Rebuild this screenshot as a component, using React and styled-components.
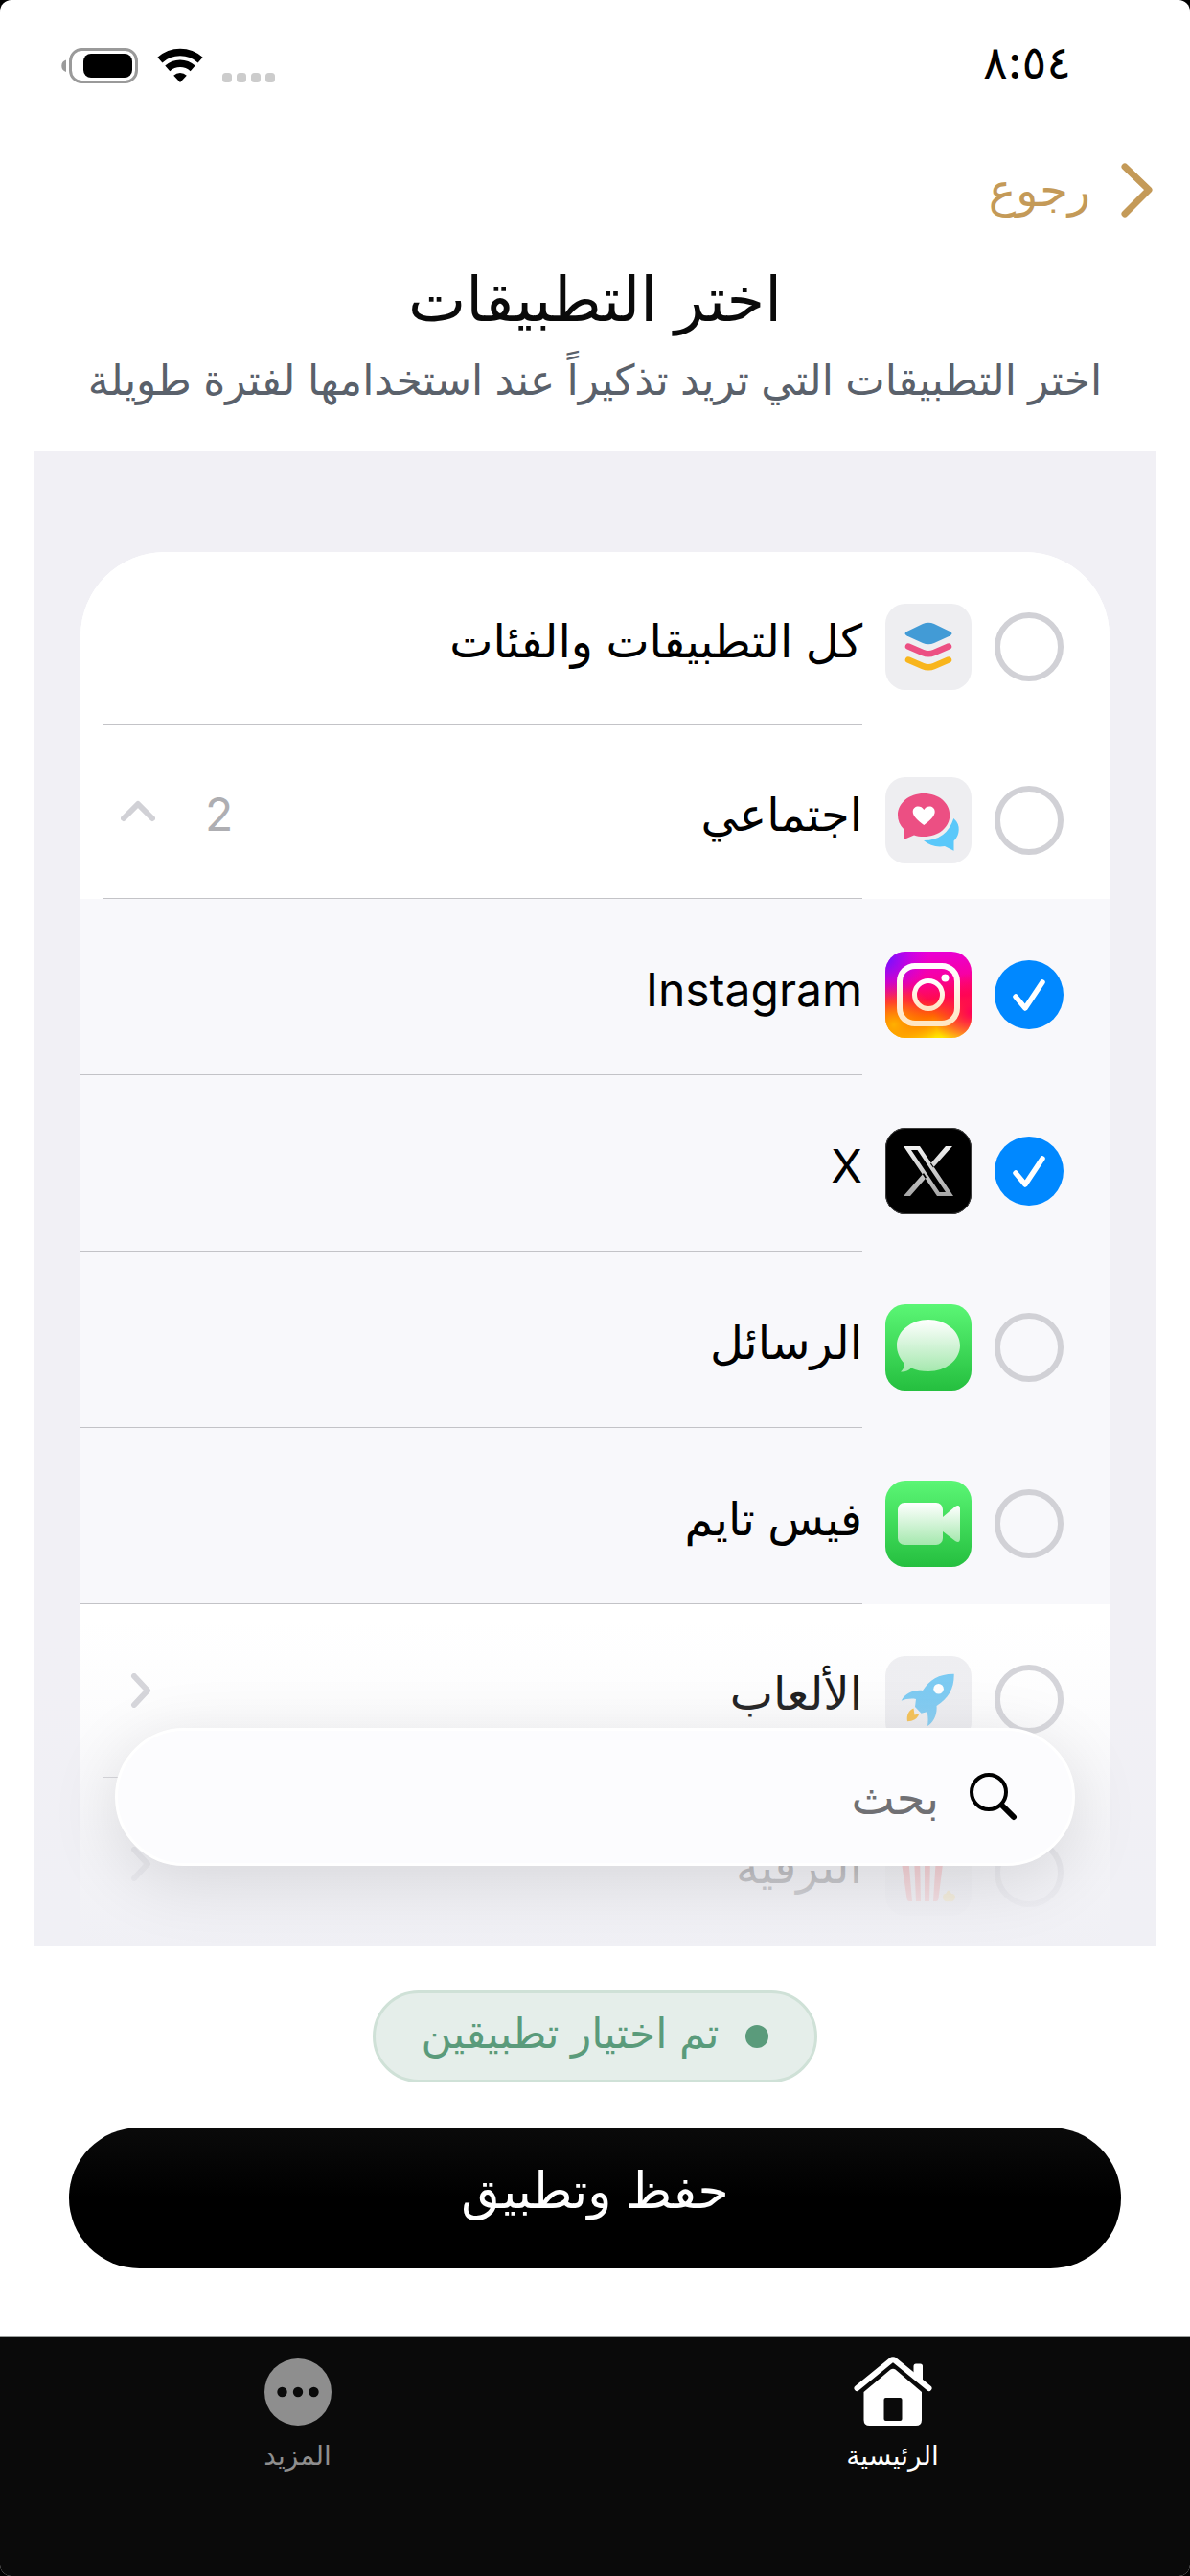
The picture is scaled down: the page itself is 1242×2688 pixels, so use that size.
import { useState } from "react";
import styled, { createGlobalStyle } from "styled-components";

//-----------------Global-------------------
const GlobalStyle = createGlobalStyle`
  * {
    box-sizing: border-box;
  }

  body {
    margin: 0;
    background: #000;
    font-family: Inter, "DejaVu Sans", sans-serif;
  }

  button, input {
    font-family: inherit;
    border: none;
    background: none;
    padding: 0;
    margin: 0;
  }
`;

//-----------------Styled components-------------------
const Screen = styled.main`
  display: flex;
  flex-direction: column;
  height: 100vh;
  background: #fff;
  border-radius: 12px;
  overflow: hidden;
`;

const StatusBar = styled.div`
  display: flex;
  justify-content: space-between;
  align-items: center;
  height: 136px;
  padding: 0 124px 0 64px;
`;

const StatusTime = styled.time`
  padding-bottom: 6px;
  font-size: 48px;
  font-weight: 500;
  line-height: 48px;
  color: #000;
`;

const StatusIcons = styled.div`
  display: flex;
  direction: ltr;
  align-items: flex-end;
  gap: 20px;
`;

const BackButton = styled.button`
  display: flex;
  align-items: center;
  align-self: flex-start;
  gap: 32px;
  height: 124px;
  padding: 0 38px;
  color: #c49a58;
  font-size: 48px;
  line-height: 56px;
  cursor: pointer;
`;

const Heading = styled.header`
  height: 211px;
  padding: 4px 36px 0;
  text-align: center;
`;

const Title = styled.h1`
  margin: 0;
  font-size: 64px;
  font-weight: 400;
  line-height: 96px;
  color: #0a0a0a;
`;

const Subtitle = styled.p`
  margin: 0;
  font-size: 44px;
  line-height: 72px;
  color: #5a616b;
  white-space: nowrap;
`;

const Picker = styled.section`
  position: relative;
  flex: 1;
  min-height: 0;
  margin: 0 36px;
  padding: 105px 48px 0;
  background: #f1f0f5;
  overflow: hidden;
`;

const AppList = styled.ul`
  margin: 0;
  padding: 0;
  list-style: none;
  background: #fff;
  border-radius: 88px 88px 0 0;
  overflow: hidden;
`;

const Row = styled.li`
  display: flex;
  align-items: center;
  gap: 24px;
  height: ${(p) => (p.$nested ? 184 : 181)}px;
  padding-right: 48px;
  background: ${(p) => (p.$nested ? "#f8f8fb" : "#fff")};
`;

const Lead = styled.div`
  display: flex;
  align-items: center;
  gap: 24px;
  padding-top: 16px;
`;

const Tick = styled.span`
  display: grid;
  width: 72px;
  height: 72px;

  & > * {
    grid-area: 1 / 1;
  }

  svg {
    pointer-events: none;
  }
`;

const TickBox = styled.input`
  appearance: none;
  width: 72px;
  height: 72px;
  border: 6px solid #d1d1d6;
  border-radius: 50%;
  cursor: pointer;

  &:checked {
    border: none;
    background: #0088ff;
  }
`;

const RowBody = styled.div`
  display: flex;
  align-items: center;
  align-self: stretch;
  flex: 1;
  margin-left: ${(p) => (p.$nested ? 0 : 24)}px;
  padding-left: 18px;
  border-bottom: 1px solid #c3c3c7;
`;

const RowLabel = styled.label`
  flex: 1;
  padding-top: 6px;
  font-size: 48px;
  line-height: 64px;
  color: #000;
`;

const Count = styled.span`
  margin-left: 52px;
  padding-top: 6px;
  font-size: 48px;
  line-height: 64px;
  color: #aeaeb2;
`;

const ExpandButton = styled.button`
  display: flex;
  color: #d1d1d6;
  cursor: pointer;
`;

const Fade = styled.div`
  position: absolute;
  left: 0;
  right: 0;
  bottom: 0;
  height: 340px;
  background: linear-gradient(
    rgba(240, 240, 245, 0) 0%,
    rgba(240, 240, 245, 0.14) 24%,
    rgba(240, 240, 245, 0.78) 75%,
    #f0f0f5 100%
  );
  pointer-events: none;
`;

const SearchBar = styled.label`
  position: absolute;
  left: 84px;
  right: 84px;
  bottom: 84px;
  display: flex;
  align-items: center;
  gap: 32px;
  height: 144px;
  padding: 0 57px;
  border: 3px solid #fff;
  border-radius: 72px;
  background: #fcfcfe;
  box-shadow: 0 16px 72px rgba(0, 0, 0, 0.12);
`;

const SearchInput = styled.input`
  flex: 1;
  min-width: 0;
  height: 100px;
  font-size: 48px;
  outline: none;

  &::placeholder {
    color: #707074;
    opacity: 1;
  }
`;

const Footer = styled.footer`
  display: flex;
  flex-direction: column;
  align-items: center;
  gap: 47px;
  padding: 46px 72px 71px;
`;

const SelectionPill = styled.output`
  display: flex;
  align-items: center;
  gap: 28px;
  height: 96px;
  padding: 0 48px;
  border: 3px solid #cfe1d7;
  border-radius: 48px;
  background: #e5eeea;
  color: #5a9b7b;

  &::before {
    content: "";
    width: 24px;
    height: 24px;
    border-radius: 50%;
    background: currentColor;
  }
`;

const PillText = styled.span`
  padding-bottom: 8px;
  font-size: 44px;
  line-height: 56px;
`;

const SaveButton = styled.button`
  align-self: stretch;
  height: 147px;
  padding-bottom: 16px;
  border-radius: 74px;
  background: linear-gradient(#0a0a0a, #000 50%);
  color: #fff;
  font-size: 52px;
  line-height: 64px;
  cursor: pointer;
`;

const TabBar = styled.nav`
  display: flex;
  height: 250px;
  border-top: 1px solid #9b9f9d;
  background: #0a0a0a;
`;

const Tab = styled.a`
  display: flex;
  flex: 1;
  flex-direction: column;
  align-items: center;
  gap: 6px;
  padding-top: 20px;
  color: ${(p) => (p.$active ? "#fff" : "#8e8e8e")};
  font-size: 28px;
  line-height: 48px;
  text-decoration: none;
`;

//-----------------Icons-------------------
const BatteryIcon = () => (
  <svg width="80" height="37" viewBox="0 0 80 37">
    <path d="M5 12.500 A6.500 6.500 0 0 0 5 25 Z" fill="#9a9a9a" />
    <rect x="9.500" y="1.500" width="69" height="34" rx="12" fill="none" stroke="#9a9a9a" strokeWidth="3" />
    <rect x="23" y="6" width="51" height="25" rx="8" fill="#000" />
  </svg>
);

const WifiIcon = () => (
  <svg width="48" height="37" viewBox="0 0 48 37">
    <g fill="none" stroke="#000" strokeWidth="7.500">
      <path d="M2.900 12.600 A31.500 31.500 0 0 1 45.100 12.600" />
      <path d="M10.800 21.400 A19.700 19.700 0 0 1 37.200 21.400" />
    </g>
    <path d="M24 36 L17.200 28.700 A10 10 0 0 1 30.800 28.700 Z" fill="#000" />
  </svg>
);

const SignalDots = () => (
  <svg width="56" height="11" viewBox="0 0 56 11">
    {[0, 15, 30, 45].map((x) => (
      <rect key={x} x={x} y="0" width="10" height="10" rx="3.500" fill="#ccc" />
    ))}
  </svg>
);

const Chevron = ({ d, width, height, stroke }) => (
  <svg width={width} height={height} viewBox={`0 0 ${width} ${height}`}>
    <path d={d} fill="none" stroke="currentColor" strokeWidth={stroke} strokeLinecap="round" strokeLinejoin="round" />
  </svg>
);

const SearchIcon = () => (
  <svg width="50" height="50" viewBox="0 0 50 50" fill="none" stroke="#000">
    <circle cx="20" cy="20" r="18" strokeWidth="4" />
    <path d="M34 34 L46 46" strokeWidth="6" strokeLinecap="round" />
  </svg>
);

const HomeIcon = () => (
  <svg width="82" height="73" viewBox="0 0 82 73">
    <path d="M62.500 22 V10 Q62.500 7.500 65 7.500 H69.500 Q72 7.500 72 10 V29 Z" fill="#fff" />
    <path d="M3.500 33 L39 4 Q41 2.500 43 4 L78.500 33" fill="none" stroke="#fff" strokeWidth="6" strokeLinecap="round" />
    <path d="M10.500 37 L38.500 13.500 Q41 11.800 43.500 13.500 L71 37 V66 Q71 72 65 72 H16.500 Q10.500 72 10.500 66 Z" fill="#fff" />
    <rect x="31.500" y="43" width="19" height="24" rx="2" fill="#0a0a0a" />
  </svg>
);

const MoreIcon = () => (
  <svg width="70" height="73" viewBox="0 0 70 73">
    <circle cx="35" cy="37" r="35" fill="#8e8e8e" />
    <g fill="#0a0a0a">
      <circle cx="18.500" cy="37" r="5.200" />
      <circle cx="35" cy="37" r="5.200" />
      <circle cx="51.500" cy="37" r="5.200" />
    </g>
  </svg>
);

const Tile = ({ fill = "#eeeef1", children }) => (
  <svg width="90" height="90" viewBox="0 0 90 90" aria-hidden="true">
    <rect width="90" height="90" rx="21" fill={fill} />
    {children}
  </svg>
);

const AllIcon = () => (
  <Tile>
    <path d="M22.500 29 L39 21 Q45 18.300 51 21 L67.500 29 Q71.500 31 67.500 33.500 L51 41 Q45 43.700 39 41 L22.500 33.500 Q18.500 31 22.500 29 Z" fill="#429bd6" />
    <path d="M24 44.500 L39 51 Q45 53.500 51 51 L66 44.500" fill="none" stroke="#ec4f83" strokeWidth="6.500" strokeLinecap="round" />
    <path d="M24 58.500 L39 65 Q45 67.500 51 65 L66 58.500" fill="none" stroke="#f8b51d" strokeWidth="6.500" strokeLinecap="round" />
  </Tile>
);

const SocialIcon = () => (
  <Tile>
    <path d="M71.300 43 Q77 48 76.700 55 Q76.500 62 71.500 66.500 L71.500 76.700 L62 72 Q49 74 40 66 Q64 66 71.300 43 Z" fill="#5ac8fa" />
    <path d="M40 17 C56 17 67.300 27 67.300 39.500 C67.300 52 56 62 40 62 C36 62 33 61.500 30 60.500 L19.500 65 V54.500 C15 50 13 45 13 39.500 C13 27 25 17 40 17 Z" fill="#ec4f83" />
    <path d="M40.300 50 C34 45 28.700 41 28.700 36 C28.700 30 37 28.500 40.300 34 C43.500 28.500 51.700 30 51.700 36 C51.700 41 46.500 45 40.300 50 Z" fill="#fff" />
  </Tile>
);

const InstagramIcon = () => (
  <Tile fill="url(#igBase)">
    <defs>
      <linearGradient id="igBase" x1="0.450" y1="0" x2="0.550" y2="1">
        <stop offset="0" stopColor="#e800d8" />
        <stop offset="0.300" stopColor="#f700a4" />
        <stop offset="0.550" stopColor="#ff0a50" />
        <stop offset="0.750" stopColor="#ff6a00" />
        <stop offset="1" stopColor="#ffe600" />
      </linearGradient>
      <radialGradient id="igViolet" cx="0" cy="0.080" r="0.500">
        <stop offset="0" stopColor="#6a14ff" />
        <stop offset="1" stopColor="#b400ff" stopOpacity="0" />
      </radialGradient>
      <radialGradient id="igRed" cx="1" cy="0.700" r="0.450">
        <stop offset="0" stopColor="#ff0058" />
        <stop offset="1" stopColor="#ff0058" stopOpacity="0" />
      </radialGradient>
      <radialGradient id="igAmber" cx="0.100" cy="0.850" r="0.500">
        <stop offset="0" stopColor="#ffb000" />
        <stop offset="1" stopColor="#ff5a00" stopOpacity="0" />
      </radialGradient>
      <linearGradient id="igGlyph" x1="0" y1="0" x2="0" y2="1">
        <stop offset="0" stopColor="#fff" />
        <stop offset="1" stopColor="#ffe6c4" />
      </linearGradient>
    </defs>
    <rect width="90" height="90" rx="21" fill="url(#igAmber)" />
    <rect width="90" height="90" rx="21" fill="url(#igRed)" />
    <rect width="90" height="90" rx="21" fill="url(#igViolet)" />
    <rect x="15" y="15" width="60" height="60" rx="16" fill="none" stroke="url(#igGlyph)" strokeWidth="6" />
    <circle cx="45" cy="45" r="14.500" fill="none" stroke="url(#igGlyph)" strokeWidth="5" />
    <circle cx="62.500" cy="27.500" r="4" fill="#fff" />
  </Tile>
);

const XIcon = () => (
  <Tile fill="#000">
    <defs>
      <linearGradient id="xGlyph" x1="0" y1="0" x2="0" y2="1">
        <stop offset="0" stopColor="#f2f2f2" />
        <stop offset="1" stopColor="#a6a6a6" />
      </linearGradient>
    </defs>
    <rect x="0.500" y="0.500" width="89" height="89" rx="20.500" fill="none" stroke="#3c3c3c" />
    <path
      fill="url(#xGlyph)"
      fillRule="evenodd"
      d="M19 19 H36 L71 71 H54 Z M27 23 L56.500 67 H63 L33.500 23 Z M63 19 H70 L50 41.500 L47 37.500 Z M19 71 H26 L43 51.500 L40 47 Z"
    />
  </Tile>
);

const GreenDefs = () => (
  <defs>
    <linearGradient id="green" x1="0" y1="0" x2="0" y2="1">
      <stop offset="0" stopColor="#5bf675" />
      <stop offset="1" stopColor="#25bf3f" />
    </linearGradient>
    <linearGradient id="frost" x1="0" y1="0" x2="0" y2="1">
      <stop offset="0" stopColor="#fff" />
      <stop offset="1" stopColor="#a5e8ae" />
    </linearGradient>
  </defs>
);

const MessagesIcon = () => (
  <Tile fill="url(#green)">
    <GreenDefs />
    <path d="M45 16 C63 16 78 28 78 43 C78 58 63 70 45 70 C38 70 32 69 27 66.500 C24 69.500 20 71 16 70.500 C19 68 20 65 19.500 61.500 C15 56.500 12 50 12 43 C12 28 27 16 45 16 Z" fill="url(#frost)" />
  </Tile>
);

const FaceTimeIcon = () => (
  <Tile fill="url(#green)">
    <GreenDefs />
    <rect x="13" y="23" width="47" height="44" rx="7" fill="url(#frost)" />
    <path d="M60 38 L73 27 Q78 24 78 30 V60 Q78 66 73 63 L60 53 Z" fill="url(#frost)" />
  </Tile>
);

const RocketIcon = () => (
  <Tile>
    <path d="M71.700 18.700 C72 34 66 44 53.500 52 C54.500 61 50 70 44 73 C45 67 44.500 62 43.500 58.300 L37.500 59.700 L31 53 L32 45 C27 44 21 45 16.700 46.700 C21 38.500 30 35 39 36 C46 25 56 18.500 71.700 18.700 Z" fill="#6ec6f2" />
    <circle cx="55.600" cy="34.300" r="5.300" fill="#fff" />
    <path d="M29.500 54.500 C24 57 22 62 23 68.300 C29 68 33.500 66 35.300 60.300 L30.500 61.500 Z" fill="#f8b935" />
  </Tile>
);

const PopcornIcon = () => (
  <Tile>
    <g fill="#ff5c5c">
      <path d="M16 28 H24 L28 75 H25 Q23 75 22.500 72 Z" />
      <path d="M30 28 H36 L37 75 H32 Z" />
      <path d="M41 28 H47 L46 75 H41 Z" />
      <path d="M53 28 H61 L55.500 72 Q55 75 53 75 H50 Z" />
    </g>
    <path d="M60 71 Q60 67 63 67 Q66 60 69 67 Q73 67 73 71 Q72 76 67 75 Q60 76 60 71 Z" fill="#ffd23c" />
  </Tile>
);

//-----------------Data-------------------
const APPS = [
  { id: "all", label: "كل التطبيقات والفئات", Icon: AllIcon },
  { id: "social", label: "اجتماعي", Icon: SocialIcon, count: 2, expand: "up" },
  { id: "instagram", label: "Instagram", Icon: InstagramIcon, nested: true },
  { id: "x", label: "X", Icon: XIcon, nested: true },
  { id: "messages", label: "الرسائل", Icon: MessagesIcon, nested: true },
  { id: "facetime", label: "فيس تايم", Icon: FaceTimeIcon, nested: true },
  { id: "games", label: "الألعاب", Icon: RocketIcon, expand: "side" },
  { id: "fun", label: "الترفيه", Icon: PopcornIcon, expand: "side" }
];

const EXPAND_PATHS = {
  up: "M3 25 L18 10 L33 25",
  side: "M14 3 L28 18 L14 33"
};

const AppRow = ({ app, checked, onToggle }) => (
  <Row $nested={app.nested}>
    <Lead>
      <Tick>
        <TickBox type="checkbox" id={app.id} checked={checked} onChange={() => onToggle(app.id)} />
        {checked && (
          <svg width="72" height="72" viewBox="0 0 72 72">
            <path d="M22 38 L32 50 L50 23" fill="none" stroke="#fff" strokeWidth="5.500" strokeLinecap="round" strokeLinejoin="round" />
          </svg>
        )}
      </Tick>
      <app.Icon />
    </Lead>
    <RowBody $nested={app.nested}>
      <RowLabel htmlFor={app.id}>{app.label}</RowLabel>
      {app.count && <Count>{app.count}</Count>}
      {app.expand && (
        <ExpandButton type="button" aria-label={app.label}>
          <Chevron d={EXPAND_PATHS[app.expand]} width={36} height={36} stroke={6} />
        </ExpandButton>
      )}
    </RowBody>
  </Row>
);

export default function App() {
  const [selected, setSelected] = useState(["instagram", "x"]);

  const toggle = (id) =>
    setSelected((prev) => (prev.includes(id) ? prev.filter((x) => x !== id) : [...prev, id]));

  return (
    <>
      <GlobalStyle />
      <Screen dir="rtl" lang="ar">
        <StatusBar>
          <StatusTime>٨:٥٤</StatusTime>
          <StatusIcons>
            <BatteryIcon />
            <WifiIcon />
            <SignalDots />
          </StatusIcons>
        </StatusBar>

        <BackButton type="button">
          <Chevron d="M4 4 L29 28 L4 53" width={34} height={57} stroke={7} />
          رجوع
        </BackButton>

        <Heading>
          <Title>اختر التطبيقات</Title>
          <Subtitle>اختر التطبيقات التي تريد تذكيراً عند استخدامها لفترة طويلة</Subtitle>
        </Heading>

        <Picker>
          <AppList>
            {APPS.map((app) => (
              <AppRow key={app.id} app={app} checked={selected.includes(app.id)} onToggle={toggle} />
            ))}
          </AppList>
          <Fade />
          <SearchBar>
            <SearchIcon />
            <SearchInput type="text" placeholder="بحث" />
          </SearchBar>
        </Picker>

        <Footer>
          <SelectionPill>
            <PillText>تم اختيار تطبيقين</PillText>
          </SelectionPill>
          <SaveButton type="button">حفظ وتطبيق</SaveButton>
        </Footer>

        <TabBar>
          <Tab href="#home" $active>
            <HomeIcon />
            الرئيسية
          </Tab>
          <Tab href="#more">
            <MoreIcon />
            المزيد
          </Tab>
        </TabBar>
      </Screen>
    </>
  );
}
